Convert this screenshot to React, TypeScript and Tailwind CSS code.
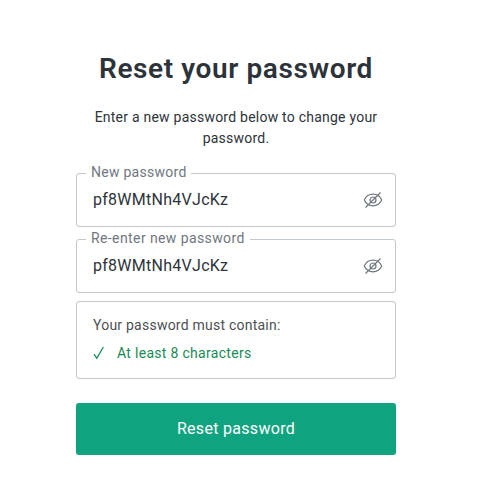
import { useState } from 'react';

interface PasswordFieldProps {
	id: string;
	label: string;
	value: string;
	labelClassName: string;
	onChange: (value: string) => void;
}

function EyeOffIcon() {
	return (
		<svg
			width="20"
			height="18"
			viewBox="0 0 20 18"
			fill="none"
			stroke="currentColor"
			strokeWidth="1.2"
			aria-hidden="true"
		>
			<path d="M1.300 9C3 5.200 6.200 3.200 10 3.200s7 2 8.700 5.800c-1.700 3.800-4.900 5.800-8.700 5.800S3 12.800 1.300 9Z" />
			<circle cx="10" cy="9" r="3" />
			<path d="M2.500 16.500 17.500 1.500" />
		</svg>
	);
}

function CheckIcon() {
	return (
		<svg width="12" height="14" viewBox="0 0 12 14" fill="none" stroke="currentColor" aria-hidden="true">
			<path d="M1 8.200 3.800 12.300 10.400 1" strokeWidth="1.3" />
		</svg>
	);
}

function PasswordField({ id, label, value, labelClassName, onChange }: PasswordFieldProps) {
	return (
		<div className="relative flex h-[54px] items-center rounded-[3px] border border-[#c2c8d0] pr-3 pl-4">
			<label
				htmlFor={id}
				className={`absolute -top-3 left-[9px] bg-white pl-[5px] text-sm leading-5 whitespace-nowrap text-[#6f7780] ${labelClassName}`}
			>
				{label}
			</label>
			<input
				id={id}
				type="text"
				value={value}
				onChange={(e) => onChange(e.target.value)}
				className="min-w-0 flex-1 bg-transparent text-base tracking-[0.27px] text-[#2d333a] outline-none"
			/>
			<button type="button" aria-label="Hide password" className="text-[#6f7780]">
				<EyeOffIcon />
			</button>
		</div>
	);
}

export default function App() {
	const [password, setPassword] = useState('pf8WMtNh4VJcKz');
	const [confirmation, setConfirmation] = useState('pf8WMtNh4VJcKz');

	return (
		<main className="flex h-[493px] w-[488px] flex-col bg-white pt-[51px] pr-[92px] pl-[76px] font-['Roboto',sans-serif] text-[#2d333a]">
			<h1 className="text-center text-[28px] leading-9 font-semibold tracking-[0.6px] whitespace-nowrap">
				Reset your password
			</h1>
			<p className="mt-5 px-3 text-center text-sm leading-[21px] tracking-[0.23px]">
				Enter a new password below to change your password.
			</p>
			<form className="mt-6 flex flex-col" onSubmit={(e) => e.preventDefault()}>
				<div className="flex flex-col gap-3">
					<PasswordField
						id="new-password"
						label="New password"
						labelClassName="pr-1 tracking-[0.27px]"
						value={password}
						onChange={setPassword}
					/>
					<PasswordField
						id="confirm-password"
						label="Re-enter new password"
						labelClassName="pr-[5px] tracking-[0.4px]"
						value={confirmation}
						onChange={setConfirmation}
					/>
				</div>
				<div className="mt-2 h-[78px] rounded-[3px] border border-[#c2c8d0] px-4 pt-3 text-sm">
					<p className="leading-[22px] tracking-[0.23px] text-[#4c4f54]">Your password must contain:</p>
					<div className="mt-1.5 flex items-center gap-3 leading-[22px] tracking-[0.3px] text-[#178a55]">
						<CheckIcon />
						<span>At least 8 characters</span>
					</div>
				</div>
				<button
					type="submit"
					className="mt-6 h-[52px] rounded-[3px] bg-[#10a37f] text-base tracking-[0.3px] text-white"
				>
					Reset password
				</button>
			</form>
		</main>
	);
}
